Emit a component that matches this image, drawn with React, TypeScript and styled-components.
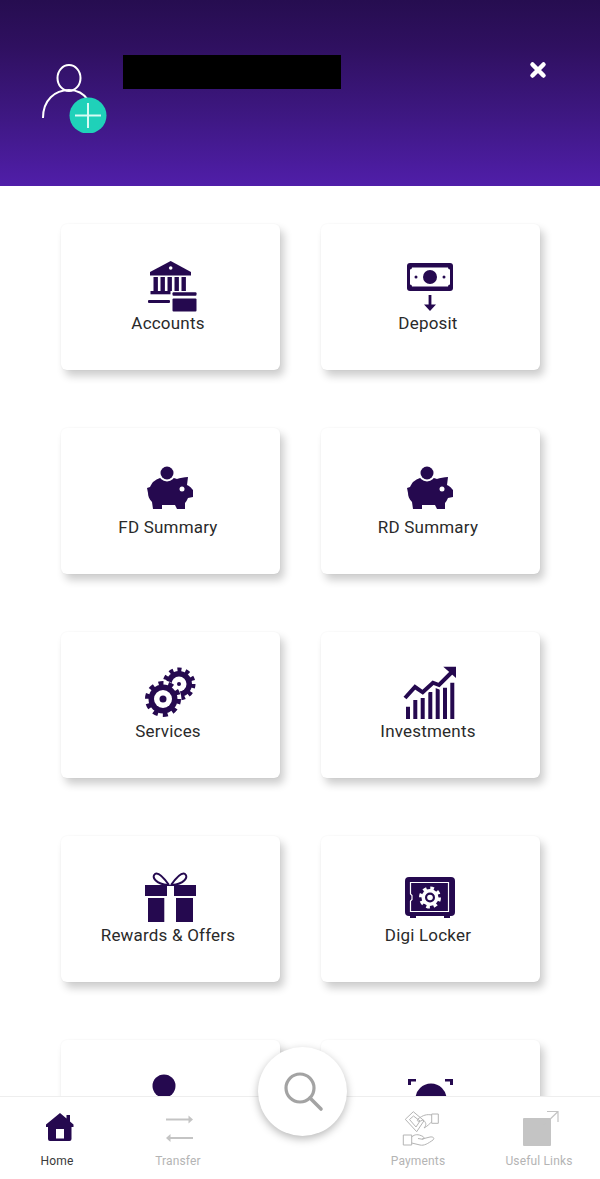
import React from 'react';
import styled, { createGlobalStyle } from 'styled-components';

const INK = '#25094f';
const MUTED = '#c4c4c4';

const GlobalStyle = createGlobalStyle`
  html, body {
    margin: 0;
    padding: 0;
    background: white;
  }
`;

const Screen = styled.div`
  width: 600px;
  height: 1179px;
  display: flex;
  flex-direction: column;
  overflow: hidden;
  background: white;
  font-family: Roboto, "Liberation Sans", sans-serif;
`;

const Header = styled.header`
  flex: 0 0 186px;
  display: flex;
  align-items: flex-start;
  padding: 55px 0 0 42px;
  box-sizing: border-box;
  background: linear-gradient(180deg, #260d50 0%, #2f1060 25%, #3f1885 65%, #501ea9 100%);
`;

const Avatar = styled.svg`
  width: 65px;
  height: 69px;
  margin-top: 9px;
  flex-shrink: 0;
`;

const NameBlock = styled.div`
  width: 218px;
  height: 34px;
  margin-left: 16px;
  background: #000;
`;

const CloseButton = styled.button`
  margin: 6px 53px 0 auto;
  padding: 0;
  width: 18px;
  height: 18px;
  border: 0;
  background: none;
  display: flex;
`;

const Content = styled.main`
  flex: 1;
  min-height: 0;
  overflow: hidden;
`;

const CardGrid = styled.div`
  display: grid;
  grid-template-columns: 219px 219px;
  column-gap: 41px;
  row-gap: 58px;
  padding: 38px 0 0 61px;
`;

const Card = styled.div`
  height: 146px;
  padding: 36px 5px 0 0;
  box-sizing: border-box;
  display: flex;
  flex-direction: column;
  align-items: center;
  background: white;
  border-radius: 6px;
  box-shadow: 4px 6px 9px rgba(0, 0, 0, 0.2), 0 0 2px rgba(0, 0, 0, 0.05);
`;

const CardIcon = styled.svg`
  width: 60px;
  height: 54px;
  overflow: visible;
  flex-shrink: 0;
`;

const CardLabel = styled.div`
  font-size: 17px;
  line-height: 18px;
  letter-spacing: 0.2px;
  color: #2a2a2a;
  white-space: nowrap;
`;

const BottomNav = styled.nav`
  flex: 0 0 83px;
  position: relative;
  display: grid;
  grid-template-columns: 114px 128px 120px 112px 130px;
  box-sizing: border-box;
  padding-top: 14px;
  background: white;
  border-top: 1px solid #eeeeee;
`;

const NavItem = styled.div<{ $active?: boolean }>`
  display: flex;
  flex-direction: column;
  align-items: center;
  gap: 7px;
  font-size: 12px;
  line-height: 14px;
  letter-spacing: 0.15px;
  white-space: nowrap;
  color: ${props => (props.$active ? '#3a3a3a' : '#b4b4b4')};
`;

const NavIcon = styled.svg`
  width: 36px;
  height: 36px;
  overflow: visible;
`;

const SearchButton = styled.button`
  position: absolute;
  left: 258px;
  top: -50px;
  width: 89px;
  height: 89px;
  padding: 0;
  border: 0;
  border-radius: 50%;
  background: white;
  box-shadow: 0 3px 9px rgba(0, 0, 0, 0.28);
  display: flex;
  align-items: center;
  justify-content: center;
`;

const gearDash = (r: number, teeth: number) => {
  const len = (2 * Math.PI * r) / (teeth * 2);
  return `${len} ${len}`;
};

interface GearProps {
  cx: number;
  cy: number;
  r: number;
  teeth: number;
  hole: number;
  dot: number;
}

const Gear: React.FC<GearProps> = ({ cx, cy, r, teeth, hole, dot }) => (
  <g>
    <circle cx={cx} cy={cy} r={r + 3} fill="white" />
    <circle cx={cx} cy={cy} r={r} fill="none" stroke={INK} strokeWidth={5} strokeDasharray={gearDash(r, teeth)} />
    <circle cx={cx} cy={cy} r={r - 1} fill={INK} />
    <circle cx={cx} cy={cy} r={hole} fill="white" />
    <circle cx={cx} cy={cy} r={dot} fill={INK} />
  </g>
);

const BankIcon = () => (
  <CardIcon viewBox="0 0 60 54">
    <path d="M32.700 1 L53 12 V15.500 H12 V12 Z" fill={INK} />
    <circle cx="32.700" cy="8" r="1.800" fill="white" />
    <path d="M15.500 17h4.400v15h-4.400zM22.500 17h4.400v15h-4.400zM29.500 17h4.400v14h-4.400zM36.500 17h4.400v14h-4.400zM43.500 17h4.400v14h-4.400z" fill={INK} />
    <rect x="12.500" y="31" width="20" height="3.300" fill={INK} />
    <rect x="10" y="40" width="22" height="3" rx="1" fill={INK} />
    <rect x="34.500" y="32.300" width="24" height="3.400" rx="1" fill={INK} />
    <rect x="34.500" y="38.500" width="24" height="13" rx="1" fill={INK} />
  </CardIcon>
);

const DepositIcon = () => (
  <CardIcon viewBox="0 0 60 54">
    <rect x="9" y="3" width="46" height="28" rx="3" fill={INK} />
    <path d="M14 7.500h36a2 2 0 0 0 2 2v15a2 2 0 0 0-2 2H14a2 2 0 0 0-2-2v-15a2 2 0 0 0 2-2z" fill="white" />
    <circle cx="32" cy="17" r="7" fill={INK} />
    <circle cx="18" cy="17" r="1.500" fill={INK} />
    <circle cx="46" cy="17" r="1.500" fill={INK} />
    <path d="M30.600 35h2.800v9.500H38L32 51l-6-6.500h4.600z" fill={INK} />
  </CardIcon>
);

const PiggyIcon = () => (
  <CardIcon viewBox="0 0 60 54">
    <path
      d="M15 18 C20 14 24 13 29 13 C33 13 36 14 39 15 C42 14 46 13 50 13 L49 21 C51 22 53 23 54 25 L55 26 V33 L50 34 C49 36 48 38 47 39 V45 H39 L37 41 H24 V45 H15 L14 38 C11 35 10 32 10 29 L9 24 L12 23 C13 21 14 19 15 18 Z"
      fill={INK}
    />
    <circle cx="29" cy="9" r="8.500" fill="white" />
    <circle cx="29" cy="9" r="6.500" fill={INK} />
    <circle cx="44" cy="25" r="2.500" fill="white" />
  </CardIcon>
);

const GearsIcon = () => (
  <CardIcon viewBox="0 0 60 54">
    <Gear cx={41} cy={16} r={14} teeth={11} hole={7.500} dot={2} />
    <Gear cx={25} cy={31} r={15.500} teeth={10} hole={9} dot={3.500} />
  </CardIcon>
);

const GrowthIcon = () => (
  <CardIcon viewBox="0 0 60 54">
    <path d="M8 38.700h4v12.300H8zM15.300 32h4v19h-4zM22.700 30h4v21h-4zM30.300 24h4v27h-4zM37.700 19.700h4v31.300h-4zM45 19.700h4v31.300h-4zM52.300 14.700h4v36.300h-4z" fill={INK} />
    <path d="M7 30 L17 19 L24.700 24.300 L35 14.700 L41 17 L54 4" fill="none" stroke="white" strokeWidth="8" />
    <path d="M7 30 L17 19 L24.700 24.300 L35 14.700 L41 17 L54 4" fill="none" stroke={INK} strokeWidth="4" />
    <path d="M45.300 -1.300 H58 V10 Z" fill={INK} />
  </CardIcon>
);

const GiftIcon = () => (
  <CardIcon viewBox="0 0 60 54">
    <path d="M31 13 C26 6 20 0 17 2 C13 5 18 12 30 13 M33 13 C38 6 44 0 47 2 C51 5 46 12 34 13" fill="none" stroke={INK} strokeWidth="2" />
    <path d="M7 13h22v11H7zM36 13h22v11H36z" fill={INK} />
    <path d="M29 13h7v1H29z" fill={INK} />
    <path d="M10 26h16.300v24H10zM38 26h17v24H38z" fill={INK} />
  </CardIcon>
);

const LockerIcon = () => (
  <CardIcon viewBox="0 0 60 54">
    <rect x="7" y="5" width="50" height="39" rx="4" fill={INK} />
    <path d="M12 43h6v3h-6zM46 43h6v3h-6z" fill={INK} />
    <path d="M12.500 10.500 H50.500 V39.500 H12.500 V29 L14 27.500 V23.500 L12.500 22 Z" fill="none" stroke="white" strokeWidth="1.200" />
    <circle cx="32" cy="25.500" r="9" fill="none" stroke="white" strokeWidth="4" strokeDasharray="3.500 3.570" />
    <circle cx="32" cy="25.500" r="8.500" fill="white" />
    <circle cx="32" cy="25.500" r="5" fill={INK} />
    <circle cx="32" cy="25.500" r="2.800" fill="white" />
  </CardIcon>
);

const ProfileDotIcon = () => (
  <CardIcon viewBox="0 0 60 54">
    <circle cx="26" cy="10" r="11.500" fill={INK} />
  </CardIcon>
);

const FaceScanIcon = () => (
  <CardIcon viewBox="0 0 60 54">
    <path d="M10 9 V3 H18 V5.500 H13 V9 Z M55 9 V3 H47 V5.500 H52 V9 Z" fill={INK} />
    <circle cx="33" cy="23" r="15.500" fill={INK} />
  </CardIcon>
);

const HomeIcon = () => (
  <NavIcon viewBox="0 0 36 36">
    <path
      d="M21 2 L27.500 7.500 V4 H31 V10.500 L34.500 13.500 V16 H32.500 V28 A2 2 0 0 1 30.500 30 H11 A2 2 0 0 1 9 28 V16 H7 V13.500 Z"
      fill={INK}
    />
    <rect x="17" y="18" width="8" height="9.500" fill="white" />
  </NavIcon>
);

const TransferIcon = () => (
  <NavIcon viewBox="0 0 36 36">
    <path d="M6 8.500 H31" stroke={MUTED} strokeWidth="2" fill="none" />
    <path d="M28.500 4.500 L33 8.500 L28.500 12.500 Z" fill={MUTED} />
    <path d="M8 27 H33" stroke={MUTED} strokeWidth="2" fill="none" />
    <path d="M10.500 23 L6 27 L10.500 31 Z" fill={MUTED} />
  </NavIcon>
);

const PaymentsIcon = () => (
  <NavIcon viewBox="0 0 36 36">
    <g transform="translate(3 0)" fill="none" stroke="#b4b4b4" strokeWidth="1" strokeLinejoin="round">
      <path d="M2.300 8.300 L10.300 0.700 L21 9.700 L13.700 20.700 Z" />
      <path d="M6.500 8.500 L10.500 5 L17 10 L13 16 Z" />
      <path d="M28.700 3 H35.300 V12.300 H28.700 Z" />
      <path d="M28.700 4 C24 3 20 4 15 8 C13.500 10 15 11 17.500 10 L20 9 C23 11 24 14 21 17 C25 15 27 12 28.700 11" />
      <path d="M0.300 24 H8.700 V34 H0.300 Z" />
      <path d="M8.700 26 C12 23 15 23 20 25.500 C22 27 21 29 18 28 L15 27.500 M19 28 L27 26 C30 25.500 32 27 30 29 C25 32.500 21 35 17 34 L8.700 32" />
    </g>
  </NavIcon>
);

const ExternalIcon = () => (
  <NavIcon viewBox="0 0 36 36">
    <rect x="2" y="7" width="28" height="28" fill={MUTED} rx="1" />
    <path d="M20 17 L37 0.500 M26 0.500 H37 V11" fill="none" stroke={MUTED} strokeWidth="1.200" />
  </NavIcon>
);

// the last row is cut off by the bottom nav, so its labels never show
const cards: { id: string; label?: string; Icon: React.FC }[] = [
  { id: 'accounts', label: 'Accounts', Icon: BankIcon },
  { id: 'deposit', label: 'Deposit', Icon: DepositIcon },
  { id: 'fd', label: 'FD Summary', Icon: PiggyIcon },
  { id: 'rd', label: 'RD Summary', Icon: PiggyIcon },
  { id: 'services', label: 'Services', Icon: GearsIcon },
  { id: 'investments', label: 'Investments', Icon: GrowthIcon },
  { id: 'rewards', label: 'Rewards & Offers', Icon: GiftIcon },
  { id: 'locker', label: 'Digi Locker', Icon: LockerIcon },
  { id: 'profile', Icon: ProfileDotIcon },
  { id: 'face', Icon: FaceScanIcon },
];

const App: React.FC = () => (
  <Screen>
    <GlobalStyle />
    <Header>
      <Avatar viewBox="0 0 65 69">
        <ellipse cx="27" cy="14" rx="11.500" ry="13" fill="none" stroke="white" strokeWidth="2" />
        <path d="M1 54 C1 36 13 26 27 26 C36 26 42 30 46 36" fill="none" stroke="white" strokeWidth="2" />
        <ellipse cx="46" cy="51.500" rx="18.500" ry="18" fill="#1fd1b9" />
        <path d="M46 39 V64 M33 51.500 H59" stroke="#d8fbf4" strokeWidth="2" />
      </Avatar>
      <NameBlock />
      <CloseButton aria-label="Close">
        <svg width="18" height="18" viewBox="0 0 18 18">
          <path d="M3.500 3.500 L14.500 14.500 M14.500 3.500 L3.500 14.500" stroke="white" strokeWidth="4.500" strokeLinecap="round" />
        </svg>
      </CloseButton>
    </Header>
    <Content>
      <CardGrid>
        {cards.map(({ id, label, Icon }) => (
          <Card key={id}>
            <Icon />
            {label && <CardLabel>{label}</CardLabel>}
          </Card>
        ))}
      </CardGrid>
    </Content>
    <BottomNav>
      <NavItem $active>
        <HomeIcon />
        Home
      </NavItem>
      <NavItem>
        <TransferIcon />
        Transfer
      </NavItem>
      <div />
      <NavItem>
        <PaymentsIcon />
        Payments
      </NavItem>
      <NavItem>
        <ExternalIcon />
        Useful Links
      </NavItem>
      <SearchButton aria-label="Search">
        <svg width="44" height="44" viewBox="0 0 44 44">
          <circle cx="19" cy="18" r="14" fill="none" stroke="#a3a3a3" strokeWidth="3.200" />
          <path d="M29 28 L40 39" stroke="#a3a3a3" strokeWidth="3.600" strokeLinecap="round" />
        </svg>
      </SearchButton>
    </BottomNav>
  </Screen>
);

export default App;
